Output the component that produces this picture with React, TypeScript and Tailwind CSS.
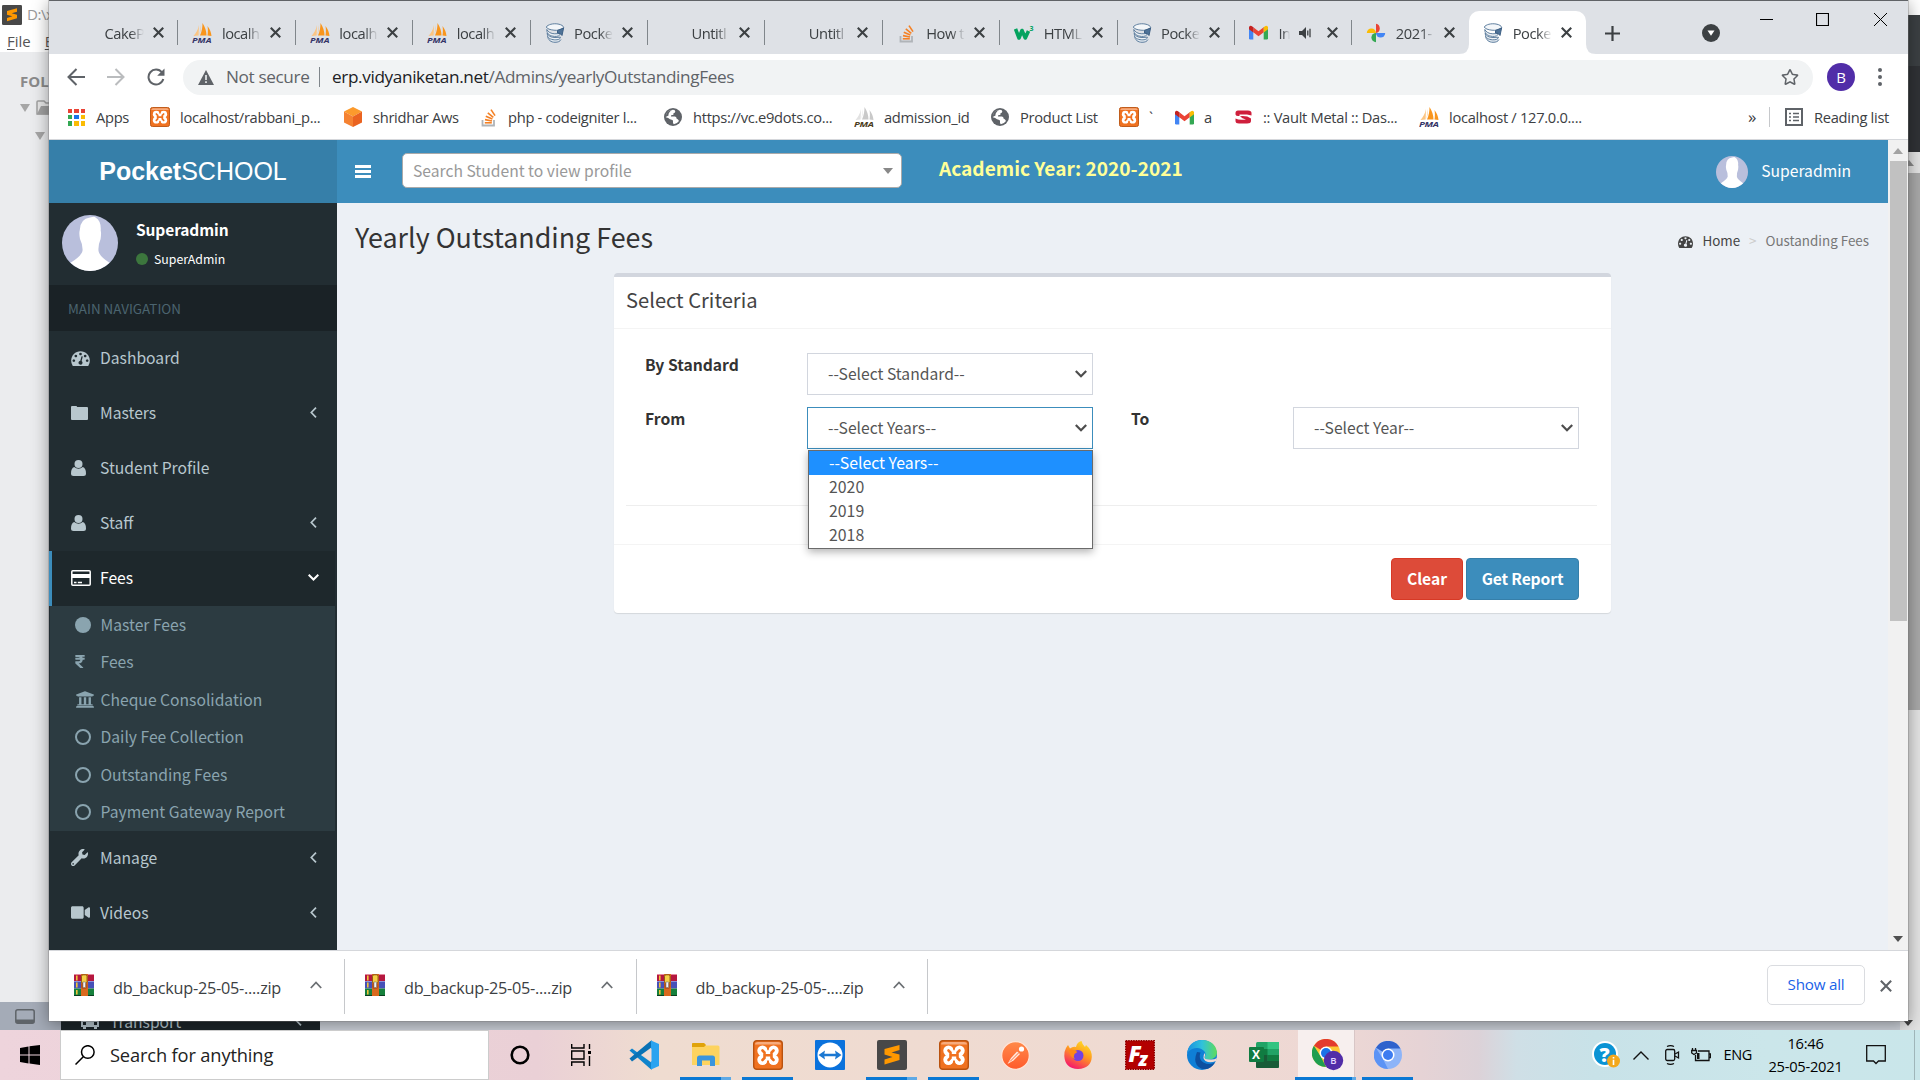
import React from 'react';
import { FaRegStar, FaWrench, FaVideo, FaUniversity, FaRupeeSign } from 'react-icons/fa';

const UI = "font-['Open_Sans',sans-serif]";
const SRC = "font-['Noto_Sans_CJK_JP',sans-serif]";

/* ---------- small logos ---------- */

function Pma({ gray = false }: { gray?: boolean }) {
  const a = gray ? '#c9c9c9' : '#f9951c';
  const b = gray ? '#e2e2e2' : '#fbc583';
  return (
    <svg width="20" height="20" viewBox="0 0 20 20" className="shrink-0">
      <path d="M7 2 L6.6 12.5 L1.5 13 C4 10 6 7 7 2Z" fill={b} />
      <path d="M10.5 0 C13 4 14.500 8 14.500 12.5 L8 12.5 C10 8 10.500 4 10.500 0Z" fill={a} />
      <path d="M9 2 C9 7 8 10 7.300 12.300 C8 9 8.300 5 9 2Z" fill={b} />
      <path d="M15.500 3 C18 6.500 19 9 19.5 13 L15.500 12.5 C16 9 16 6 15.500 3Z" fill={a} />
      <text x="0" y="19.5" fontSize="7.600" fontWeight="700" fontStyle="italic" fontFamily="Open Sans" textLength="19.500" lengthAdjust="spacingAndGlyphs" fill={gray ? '#4a3c20' : '#343466'}>PMA</text>
    </svg>
  );
}

function Pocket() {
  return (
    <svg width="20" height="20" viewBox="0 0 20 20" className="shrink-0" fill="none" stroke="#5f7f9f" strokeWidth="1">
      <path d="M2.5 13 C3 17 6 19.3 10 19.3 C13 19.3 15 18.5 16 16.5" fill="#dfe7ee" />
      <path d="M2.2 10 C3 13 6 14.5 10 14.5 L15.5 14.2 C15.5 16 13 17 9.5 16.8 C5.5 16.5 2.8 15 2.5 12.5Z" fill="#eef2f6" />
      <path d="M1.8 6.5 C3 9 6 10.8 9.8 10.8 L15.5 10.5 C15 12.8 12.5 13.6 9.5 13.4 C5 13 2.5 11 2 8.6Z" fill="#eef2f6" />
      <path d="M1.2 4 C3 1.5 8 .2 13 1 C16.5 1.6 18.3 3 18.8 4.5 C16 7 12.5 7.6 9 7.2 C5 6.8 2.3 5.8 1.2 4Z" fill="#f3f6f9" />
      <path d="M12.5 7.5 L18.6 5 L17 12.500 L15.200 10.5 L12.500 10Z" fill="#4f7398" stroke="#3d5f84" />
    </svg>
  );
}

function StackO() {
  return (
    <svg width="18" height="20" viewBox="0 0 18 20" className="shrink-0" fill="none">
      <path d="M2.500 13 V18.500 H14 V13" stroke="#b0b4b8" strokeWidth="1.800" />
      <g stroke="#f48024" strokeWidth="1.600">
        <path d="M4.800 15.800 H11.800" />
        <path d="M5 12.600 L12 14" />
        <path d="M5.800 9.300 L12.400 12" />
        <path d="M7.800 5.900 L13.300 10.400" />
        <path d="M11 2.600 L15 8.600" />
      </g>
    </svg>
  );
}

function W3() {
  return (
    <svg width="20" height="20" viewBox="0 0 20 20" className="shrink-0">
      <path d="M1.500 6 L5 15 L8 7.500 L11.300 15 L14.500 8" fill="none" stroke="#04a35f" strokeWidth="3.600" strokeLinejoin="round" />
      <text x="15.500" y="7.500" fontSize="7" fontWeight="700" fontFamily="Open Sans" fill="#04a35f">3</text>
    </svg>
  );
}

function Gmail() {
  return (
    <svg width="19" height="15" viewBox="0 0 19 15" className="shrink-0">
      <path d="M0 2 H4.300 V14.500 H1.200 Q0 14.500 0 13.300Z" fill="#4285f4" />
      <path d="M19 2 H14.700 V14.500 H17.800 Q19 14.500 19 13.300Z" fill="#34a853" />
      <path d="M4.300 2.200 L9.500 6.200 L14.700 2.200 V7.300 L9.500 11.300 L4.300 7.300Z" fill="#ea4335" />
      <path d="M14.700 2.200 L16 1.200 Q17 .3 18.200 1 Q19 1.500 19 2.500 V4.200 L14.700 7.400Z" fill="#fbbc04" />
      <path d="M4.300 2.200 L3 1.200 Q2 .3 .8 1 Q0 1.500 0 2.500 V4.200 L4.300 7.400Z" fill="#c5221f" />
    </svg>
  );
}

function Photos() {
  return (
    <svg width="20" height="20" viewBox="0 0 20 20" className="shrink-0">
      <path d="M10 10 V.8 A4.700 4.700 0 0 1 10 10Z" fill="#ea4335" />
      <path d="M10 10 H.8 A4.600 4.600 0 0 1 10 10Z" fill="#fbbc04" />
      <path d="M10 10 H19.200 A4.600 4.600 0 0 1 10 10Z" fill="#4285f4" />
      <path d="M10 10 V19.200 A4.600 4.600 0 0 1 10 10Z" fill="#34a853" />
    </svg>
  );
}

function Xampp({ w = 20, h = 20 }: { w?: number; h?: number }) {
  return (
    <svg width={w} height={h} viewBox="0 0 30 30" className="shrink-0">
      <rect x=".7" y=".7" width="28.600" height="28.600" rx="3" fill="#f07220" stroke="#b9520f" strokeWidth="1.400" />
      <path d="M2 4.500 Q2 2 5 2 H25 Q28 2 28 4.500 Z" fill="#f7ab7c" />
      <g fill="#fff">
        <circle cx="9.500" cy="10.700" r="5.200" />
        <circle cx="20.500" cy="10.700" r="5.200" />
        <circle cx="9.500" cy="19.700" r="5.200" />
        <circle cx="20.500" cy="19.700" r="5.200" />
        <path d="M8 10.500 H22 V20 H8Z" />
      </g>
      <path d="M15 6 V9.500 M15 24.500 V21" stroke="#f07220" strokeWidth="2" />
      <path d="M1.500 15.200 L5 13.800 V16.600Z M28.500 15.200 L25 13.800 V16.600Z" fill="#f07220" />
      <path d="M9.500 10.500 L11.500 12.500 V18 L9.500 20 M20.500 10.500 L18.500 12.500 V18 L20.500 20 M11.500 15.200 H18.500" stroke="#f07220" strokeWidth="2.600" fill="none" strokeLinecap="round" />
    </svg>
  );
}

function Aws() {
  return (
    <svg width="18" height="20" viewBox="0 0 18 20" className="shrink-0">
      <path d="M9 0 L18 4.500 L9 9.500 L0 4.500Z" fill="#fc9a2c" />
      <path d="M0 4.500 L9 9.500 V20 L0 15.500Z" fill="#f58232" />
      <path d="M18 4.500 L9 9.500 V20 L18 15.500Z" fill="#ea6320" />
    </svg>
  );
}

function Globe() {
  return (
    <svg width="18" height="18" viewBox="0 0 18 18" className="shrink-0">
      <circle cx="9" cy="9" r="9" fill="#5f6368" />
      <path d="M9 1.800 Q11.500 2 11.300 3.800 Q11 5 9.500 5.300 L9.300 7 H8 Q6.500 7 7 8.500 H11 Q12.800 8.800 12.500 10.500 L14 11.500 L15 13 Q13 16 9.800 16.200 L9 15 V12.500 Q7.800 11.500 6 11.300 Q4.500 9.500 1.800 9.200 Q1.800 2.500 9 1.800Z" fill="#fff" />
      <path d="M1.800 9 Q1.800 2.500 8 2 Q4 4.500 4.500 7.500 Q3 8 1.800 9Z" fill="#5f6368" />
    </svg>
  );
}

function Vault() {
  return (
    <svg width="17" height="14" viewBox="0 0 17 14" className="shrink-0">
      <path d="M3 .5 H13 Q16.500 .5 16.500 3 V5.500 L12 4.500 H4.500 V6 Q1 6.500 .5 4.500 V3 Q.5 .5 3 .5Z" fill="#cf1f3c" />
      <path d="M5 6.200 Q12 5.500 16 8.500 V11 Q16 13.500 12 13.500 H4 Q.5 13.500 .5 11 V8.500 Q4 10.500 11 9.500 Q7 8.500 5 6.200Z" fill="#cf1f3c" />
    </svg>
  );
}

function AppsGrid() {
  const c = ['#ea4335', '#ea4335', '#ea4335', '#34a853', '#1a73e8', '#fbbc04', '#34a853', '#fbbc04', '#fbbc04'];
  return (
    <span className="grid h-[17px] w-[17px] grid-cols-3 gap-[2px]">
      {c.map((x, i) => (
        <span key={i} style={{ background: x }} />
      ))}
    </span>
  );
}

function Rar() {
  return (
    <svg width="20" height="22" viewBox="0 0 20 22" className="shrink-0">
      <rect width="20" height="7" fill="#b5173f" />
      <rect width="20" height="1" fill="#e58aa0" />
      <rect y="7" width="20" height="7.500" fill="#4650b8" />
      <rect y="7" width="20" height="1" fill="#8b90da" />
      <rect y="14.500" width="20" height="7.500" fill="#16803c" />
      <rect y="21" width="20" height="1" fill="#0b3d1f" />
      <rect x="7" width="7" height="22" fill="#d9691e" />
      <rect x="2" y="1.500" width="1.600" height="5" fill="#f0c23a" />
      <rect x="2" y="8.500" width="1.600" height="5" fill="#f0c23a" />
      <rect x="2" y="16" width="1.600" height="4.500" fill="#f0c23a" />
      <rect x="7.500" y=".8" width="5.500" height="8.500" rx="1.500" fill="#f6cf45" stroke="#7a4a10" strokeWidth=".8" />
      <path d="M7 9.500 H13.500 V13 L12 15 H8.500 L7 13Z" fill="#b9551a" />
      <rect x="9" y="8" width="2.600" height="5.500" fill="#f2f2f2" stroke="#666" strokeWidth=".5" />
    </svg>
  );
}

function Cross({ s = 10, w = 2, c = '#3c4043' }: { s?: number; w?: number; c?: string }) {
  return (
    <svg width={s} height={s} viewBox="0 0 10 10" className="shrink-0">
      <path d="M.7 .7 L9.300 9.300 M9.300 .7 L.7 9.300" stroke={c} strokeWidth={w} />
    </svg>
  );
}

/* ---------- browser chrome ---------- */

const tabs: { icon: React.ReactNode; text: string }[] = [
  { icon: null, text: 'CakeP' },
  { icon: <Pma />, text: 'localh' },
  { icon: <Pma />, text: 'localh' },
  { icon: <Pma />, text: 'localh' },
  { icon: <Pocket />, text: 'Pocke' },
  { icon: null, text: 'Untitl' },
  { icon: null, text: 'Untitl' },
  { icon: <StackO />, text: 'How t' },
  { icon: <W3 />, text: 'HTML' },
  { icon: <Pocket />, text: 'Pocke' },
  { icon: <Gmail />, text: 'In' },
  { icon: <Photos />, text: '2021-' },
  { icon: <Pocket />, text: 'Pocke' },
];

function TabStrip() {
  return (
    <div className={`flex h-[54px] shrink-0 items-start border-t border-[#606367] bg-[#dee1e6] pl-[12px] ${UI}`}>
      {tabs.map((t, i) => {
        const active = i === 12;
        const gmail = i === 10;
        return (
          <div key={i} className={`relative mt-[10px] flex h-[43px] shrink-0 items-center ${active ? '-ml-px w-[117px] rounded-t-[10px] bg-white pl-[14.500px]' : 'w-[117.400px] pl-[14px]'}`}>
            {active && (
              <>
                <svg width="10" height="10" className="absolute bottom-0 -left-[10px]"><path d="M10 0 V10 H0 Q10 10 10 0Z" fill="#fff" /></svg>
                <svg width="10" height="10" className="absolute -right-[10px] bottom-0"><path d="M0 0 V10 H10 Q0 10 0 0Z" fill="#fff" /></svg>
              </>
            )}
            <span className="flex w-[20px] justify-center">{t.icon}</span>
            <span className={`ml-[9.500px] text-[14.700px] leading-[20px] tracking-[-0.45px] whitespace-nowrap text-[#3c4043] ${gmail ? 'w-[12px] [mask-image:linear-gradient(90deg,#000_40%,transparent)]' : 'w-[39px] [mask-image:linear-gradient(90deg,#000_65%,transparent)]'}`}>
              {t.text}
            </span>
            {gmail && (
              <svg width="14" height="12" viewBox="0 0 14 12" className="ml-[9px]">
                <path d="M0 4 H3 L7 0 V12 L3 8 H0Z" fill="#3c4043" />
                <path d="M8.800 3.500 V8.500 M11 1.800 V10.200" stroke="#3c4043" strokeWidth="1.300" fill="none" />
              </svg>
            )}
            <span className={gmail ? 'ml-[14px] flex' : 'ml-[9px] flex'}><Cross s={11} w={1.9} /></span>
            {i < 11 && <span className="ml-auto h-[25px] w-px bg-[#80868b]" />}
          </div>
        );
      })}
      <svg width="15" height="15" viewBox="0 0 15 15" className="mt-[25px] ml-[19px]"><path d="M7.500 0 V15 M0 7.500 H15" stroke="#3c4043" strokeWidth="2.200" /></svg>
      <svg width="18" height="18" viewBox="0 0 18 18" className="mt-[23px] ml-[82px]"><circle cx="9" cy="9" r="9" fill="#3c4043" /><path d="M5.500 6.500 H12.500 L9 11.800Z" fill="#fff" /></svg>
      <svg width="13" height="13" viewBox="0 0 13 13" className="mt-[12px] ml-[40px]"><path d="M0 6.500 H13" stroke="#000" /></svg>
      <svg width="13" height="13" viewBox="0 0 13 13" className="mt-[12px] ml-[43px]"><path d="M.5 .5 H12.500 V12.500 H.5Z" stroke="#000" fill="none" strokeWidth="1.200" /></svg>
      <svg width="13" height="13" viewBox="0 0 13 13" className="mt-[12px] ml-[45px]"><path d="M0 0 L13 13 M13 0 L0 13" stroke="#000" /></svg>
    </div>
  );
}

function Toolbar() {
  return (
    <div className={`flex h-[46px] shrink-0 items-center pl-[18px] ${UI}`}>
      <svg width="18" height="18" viewBox="0 0 18 18" fill="none" stroke="#5f6368" strokeWidth="2"><path d="M18 9 H2 M9.500 1 L1.500 9 L9.500 17" /></svg>
      <svg width="18" height="18" viewBox="0 0 18 18" fill="none" stroke="#babcbe" strokeWidth="2" className="ml-[22px]"><path d="M0 9 H16 M8.500 1 L16.500 9 L8.500 17" /></svg>
      <svg width="18" height="18" viewBox="0 0 18 18" fill="none" className="ml-[22px]"><path d="M15 4.500 A7.500 7.500 0 1 0 16.300 11" stroke="#5f6368" strokeWidth="2" /><path d="M17.500 .5 V7.800 H10.200Z" fill="#5f6368" /></svg>
      <div className="ml-[18px] flex h-[35px] w-[1630px] items-center rounded-full bg-[#f1f3f4] pl-[15px] text-[17.200px] tracking-[-0.370px] text-[#5f6368]">
        <svg width="16" height="15" viewBox="0 0 16 15"><path d="M8 0 L16 15 H0Z" fill="#5f6368" /><path d="M7.200 5 H8.800 V10 H7.200Z M7.200 11.200 H8.800 V12.900 H7.200Z" fill="#f1f3f4" /></svg>
        <span className="ml-[12px] w-[93px] leading-[24px] whitespace-nowrap">Not secure</span>
        <span className="h-[20px] w-px bg-[#80868b]" />
        <span className="ml-[12px] leading-[24px] whitespace-nowrap"><span className="text-[#202124]">erp.vidyaniketan.net</span>/Admins/yearlyOutstandingFees</span>
        <FaRegStar className="mr-[14px] ml-auto h-[18px] w-[18px]" />
      </div>
      <div className="ml-[14px] flex h-[28px] w-[28px] items-center justify-center rounded-full bg-[#512da8] text-[15px] text-white">B</div>
      <svg width="4" height="18" viewBox="0 0 4 18" className="ml-[23px]" fill="#5f6368"><circle cx="2" cy="2" r="2" /><circle cx="2" cy="9" r="2" /><circle cx="2" cy="16" r="2" /></svg>
    </div>
  );
}

function Mark({ w, g, icon, text }: { w: string; g: string; icon: React.ReactNode; text: string }) {
  return (
    <div className={`flex shrink-0 items-center ${w} ${g}`}>
      {icon}
      <span className="whitespace-nowrap">{text}</span>
    </div>
  );
}

function Bookmarks() {
  return (
    <div className={`flex h-[39px] shrink-0 items-center pb-[5px] pl-[19px] text-[14.700px] leading-[20px] tracking-[-0.3px] text-[#3c4043] ${UI}`}>
      <Mark w="w-[82px]" g="gap-[11px]" icon={<AppsGrid />} text="Apps" />
      <Mark w="w-[194px]" g="gap-[10px]" icon={<Xampp />} text="localhost/rabbani_p..." />
      <Mark w="w-[136px]" g="gap-[11px]" icon={<Aws />} text="shridhar Aws" />
      <Mark w="w-[184px]" g="gap-[10px]" icon={<StackO />} text="php - codeigniter l..." />
      <Mark w="w-[190px]" g="gap-[11px]" icon={<Globe />} text="https://vc.e9dots.co..." />
      <Mark w="w-[137px]" g="gap-[10px]" icon={<Pma gray />} text="admission_id" />
      <Mark w="w-[128px]" g="gap-[11px]" icon={<Globe />} text="Product List" />
      <Mark w="w-[56px]" g="gap-[10px]" icon={<Xampp />} text="`" />
      <Mark w="w-[60px]" g="gap-[10px]" icon={<Gmail />} text="a" />
      <Mark w="w-[184px]" g="gap-[11px]" icon={<Vault />} text=":: Vault Metal :: Das..." />
      <Mark w="w-[329px]" g="gap-[10px]" icon={<Pma />} text="localhost / 127.0.0...." />
      <span className="w-[21px] text-[17px]">»</span>
      <span className="h-[20px] w-px bg-[#c6c8cb]" />
      <svg width="18" height="18" viewBox="0 0 18 18" className="mr-[11px] ml-[15px]" fill="none" stroke="#5f6368">
        <rect x="1" y="1" width="16" height="16" strokeWidth="2" />
        <path d="M4 5.500 H6 M8 5.500 H14 M4 9 H6 M8 9 H14 M4 12.500 H6 M8 12.500 H14" strokeWidth="1.700" />
      </svg>
      <span>Reading list</span>
    </div>
  );
}

/* ---------- web page ---------- */

function Avatar({ s }: { s: number }) {
  return (
    <svg width={s} height={s} viewBox="0 0 56 56" className="shrink-0">
      <circle cx="28" cy="28" r="28" fill="#b9bfdc" />
      <path d="M28 2.500 Q33 1 33.500 2.500 Q39.500 6 38.700 16 Q39.500 17 38.600 24 Q36 30 36.500 36 Q37 41 47.500 47.800 Q39 56 28 56 Q17 56 8.500 47.800 Q19.500 41 20.500 36 Q21 30 18 24 Q16.800 18 17.800 15 Q18 4 28 2.500Z" fill="#fff" />
    </svg>
  );
}

function Dash({ className }: { className: string }) {
  return (
    <svg viewBox="0 128 1792 1536" className={className} fill="currentColor">
      <path d="M384 1152q0-53-37.500-90.500t-90.500-37.500-90.500 37.500-37.500 90.500 37.500 90.500 90.500 37.500 90.500-37.500 37.500-90.500zm192-448q0-53-37.500-90.500t-90.500-37.500-90.500 37.500-37.500 90.500 37.500 90.500 90.500 37.500 90.500-37.500 37.500-90.500zm428 481l101-382q6-26-7.500-48.500t-38.500-29.500-48 6.500-30 39.500l-101 382q-60 5-107 43.500t-63 98.500q-20 77 20 146t117 89 146-20 89-117q16-60-6-117t-72-91zm660-33q0-53-37.500-90.500t-90.500-37.500-90.500 37.500-37.500 90.500 37.500 90.500 90.500 37.500 90.500-37.500 37.500-90.500zm-640-640q0-53-37.500-90.500t-90.500-37.500-90.500 37.500-37.500 90.500 37.500 90.500 90.500 37.500 90.500-37.500 37.500-90.500zm448 192q0-53-37.500-90.500t-90.500-37.500-90.500 37.500-37.500 90.500 37.500 90.500 90.500 37.500 90.500-37.500 37.500-90.500zm320 448q0 261-141 483-19 29-54 29h-1402q-35 0-54-29-141-221-141-483 0-182 71-348t191-286 286-191 348-71 348 71 286 191 191 286 71 348z" />
    </svg>
  );
}

const FolderIcon = () => (
  <svg width="17" height="14" viewBox="0 0 17 14" fill="currentColor"><path d="M0 1 Q0 0 1 0 H5 Q6 0 6.200 1 H16 Q17 1 17 2 V13 Q17 14 16 14 H1 Q0 14 0 13Z" /></svg>
);
const UserIcon = () => (
  <svg width="15" height="16" viewBox="0 0 15 16" fill="currentColor"><circle cx="7.500" cy="4" r="4" /><path d="M3.200 7 Q0 8 0 13.500 Q0 16 2.500 16 H12.500 Q15 16 15 13.500 Q15 8 11.800 7 Q9.800 8.800 7.500 8.800 Q5.200 8.800 3.200 7Z" /></svg>
);
const CardIcon = () => (
  <svg width="20" height="16" viewBox="0 0 20 16"><rect x=".8" y=".8" width="18.400" height="14.400" rx="1" fill="none" stroke="currentColor" strokeWidth="1.500" /><path d="M1 4 H19 V8 H1Z M3 11.800 H5.500 V13.300 H3Z M6.800 11.800 H11 V13.300 H6.800Z" fill="currentColor" /></svg>
);

function Chev({ down = false }: { down?: boolean }) {
  return down ? (
    <svg width="11" height="7" viewBox="0 0 11 7" className="mr-[16px] ml-auto" fill="none" stroke="currentColor" strokeWidth="2"><path d="M.7 .8 L5.500 5.500 L10.300 .8" /></svg>
  ) : (
    <svg width="7" height="11" viewBox="0 0 7 11" className="mr-[20px] ml-auto" fill="none" stroke="currentColor" strokeWidth="1.700"><path d="M6 .7 L1.300 5.500 L6 10.300" /></svg>
  );
}

function NavItem({ icon, text, open = false, arrow = true }: { icon: React.ReactNode; text: string; open?: boolean; arrow?: boolean }) {
  return (
    <div className={`flex h-[55px] shrink-0 items-center pb-[2px] ${open ? 'mr-[2px] border-l-[3px] border-[#3c8dbc] bg-[#1e282c] pl-[19px] text-white' : 'pl-[22px]'}`}>
      <span className="flex w-[29px]">{icon}</span>
      <span>{text}</span>
      {arrow && <Chev down={open} />}
    </div>
  );
}

function SubItem({ icon, text }: { icon: React.ReactNode; text: string }) {
  return (
    <div className="flex h-[37.500px] items-center pl-[25px]">
      <span className="flex w-[25.500px] shrink-0">{icon}</span>
      <span className="whitespace-nowrap">{text}</span>
    </div>
  );
}

const Ring = () => <span className="h-[16px] w-[16px] rounded-full border-[2.500px] border-current" />;

function Sidebar() {
  return (
    <div className="flex w-[288px] shrink-0 flex-col overflow-hidden bg-[#222d32] text-[15.670px] leading-[24px] text-[#b8c7ce]">
      <div className="flex h-[82px] shrink-0 pt-[12px] pl-[13px]">
        <Avatar s={56} />
        <div className="ml-[18px] text-white">
          <div className="mt-[3px] text-[15.500px] leading-[22px] font-bold tracking-[-0.1px]">Superadmin</div>
          <div className="mt-[9px] flex items-center text-[12.300px] leading-[20px]">
            <span className="mr-[6px] h-[12px] w-[12px] rounded-full bg-[#3c763d]" />SuperAdmin
          </div>
        </div>
      </div>
      <div className="flex h-[46px] shrink-0 items-center bg-[#1a2226] pl-[19px] text-[13.400px] text-[#4b646f]">MAIN NAVIGATION</div>
      <NavItem icon={<Dash className="h-[16px] w-[19px]" />} text="Dashboard" arrow={false} />
      <NavItem icon={<FolderIcon />} text="Masters" />
      <NavItem icon={<UserIcon />} text="Student Profile" arrow={false} />
      <NavItem icon={<UserIcon />} text="Staff" />
      <NavItem icon={<CardIcon />} text="Fees" open />
      <div className="mr-[2px] ml-px shrink-0 bg-[#2c3b41] text-[#8aa4af]">
        <SubItem icon={<span className="h-[16px] w-[16px] rounded-full bg-current" />} text="Master Fees" />
        <SubItem icon={<FaRupeeSign className="mb-[2px] h-[15px] w-[10px]" />} text="Fees" />
        <SubItem icon={<FaUniversity className="h-[19px] w-[20px]" />} text="Cheque Consolidation" />
        <SubItem icon={<Ring />} text="Daily Fee Collection" />
        <SubItem icon={<Ring />} text="Outstanding Fees" />
        <SubItem icon={<Ring />} text="Payment Gateway Report" />
      </div>
      <NavItem icon={<FaWrench className="h-[17px] w-[17px]" />} text="Manage" />
      <NavItem icon={<FaVideo className="h-[17px] w-[19px]" />} text="Videos" />
    </div>
  );
}

function Select({ text, focus = false }: { text: string; focus?: boolean }) {
  return (
    <div className={`flex h-[42px] w-[286px] shrink-0 items-center border bg-white pl-[20px] text-[#555] ${focus ? 'border-[#3c8dbc]' : 'border-[#d2d6de]'}`}>
      <span>{text}</span>
      <svg width="12" height="8" viewBox="0 0 12 8" className="mr-[5px] ml-auto" fill="none" stroke="#4d4d4d" strokeWidth="2.200"><path d="M.8 1 L6 6.200 L11.200 1" /></svg>
    </div>
  );
}

function Criteria() {
  return (
    <div className="ml-[277px] h-[340px] w-[997px] rounded-[4px] border-t-[4px] border-[#d2d6de] bg-white text-[15.670px] leading-[24px] text-[#333] shadow-[0_1px_1px_rgba(0,0,0,0.1)]">
      <div className="flex h-[52px] items-center border-b border-[#f4f4f4] pb-[5px] pl-[12px] text-[20.150px] text-[#444]">Select Criteria</div>
      <div className="flex h-[54px] pt-[24px] pl-[31px]">
        <span className="w-[162px] font-bold">By Standard</span>
        <Select text="--Select Standard--" />
      </div>
      <div className="relative flex h-[97px] pt-[24px] pl-[31px]">
        <span className="w-[162px] font-bold">From</span>
        <Select text="--Select Years--" focus />
        <span className="ml-[38px] w-[162px] font-bold">To</span>
        <Select text="--Select Year--" />
        <div className="absolute top-[67px] left-[194px] z-10 h-[99px] w-[285px] border border-[#6b6b6b] bg-white text-[15.850px] leading-[24px] text-[#555] shadow-[0_3px_8px_rgba(0,0,0,0.3)]">
          <div className="bg-[#1e90ff] pl-[20px] text-white">--Select Years--</div>
          {['2020', '2019', '2018'].map((y) => (
            <div key={y} className="pl-[20px]">{y}</div>
          ))}
        </div>
      </div>
      <div className="mr-[14px] ml-[12px] mt-[25px] h-px bg-[#eee]" />
      <div className="mt-[38px] flex justify-end gap-[3px] border-t border-[#f4f4f4] pt-[13px] pr-[32px] font-bold text-white">
        <div className="flex h-[42px] w-[72px] items-center justify-center rounded-[4px] border border-[#d73925] bg-[#dd4b39]">Clear</div>
        <div className="flex h-[42px] w-[113px] items-center justify-center rounded-[4px] border border-[#367fa9] bg-[#3c8dbc] tracking-[-0.15px]">Get Report</div>
      </div>
    </div>
  );
}

function ScrollArrow({ up = false, c = '#505050' }: { up?: boolean; c?: string }) {
  return (
    <svg width="10" height="6" viewBox="0 0 10 6"><path d={up ? 'M5 0 L10 6 H0Z' : 'M0 0 H10 L5 6Z'} fill={c} /></svg>
  );
}

function WebPage() {
  return (
    <div className="flex h-[811px] shrink-0 border-t border-[#d5d7db]">
      <div className={`flex w-[1839px] flex-col ${SRC}`}>
        <div className="flex h-[63px] shrink-0 bg-[#3c8dbc]">
          <div className="flex w-[288px] items-center justify-center bg-[#367fa9] pb-[2px] font-['Liberation_Sans',sans-serif] text-[25px] leading-[30px] text-white">
            <b>Pocket</b>SCHOOL
          </div>
          <div className="flex flex-1 items-center">
            <div className="ml-[18px] flex w-[16px] flex-col gap-[2px]">
              <span className="h-[3px] bg-white" /><span className="h-[3px] bg-white" /><span className="h-[3px] bg-white" />
            </div>
            <div className="mb-[2px] ml-[31px] flex h-[35px] w-[500px] items-center rounded-[5px] border border-[#aaa] bg-white pl-[10px] text-[15.670px] text-[#999]">
              Search Student to view profile
              <svg width="10" height="6" viewBox="0 0 10 6" className="mr-[8px] ml-auto"><path d="M0 0 H10 L5 6Z" fill="#888" /></svg>
            </div>
            <div className="mb-[8px] ml-[37px] text-[19.100px] leading-[24px] font-bold text-[#ffff99]">Academic Year: 2020-2021</div>
            <div className="mr-[37px] ml-auto flex items-center gap-[13px] text-[15.670px] text-white">
              <Avatar s={32} /><span className="mb-[2px]">Superadmin</span>
            </div>
          </div>
        </div>
        <div className="flex min-h-0 flex-1">
          <Sidebar />
          <div className="flex-1 bg-[#ecf0f5]">
            <div className="flex h-[70px] justify-between pr-[19px] pl-[18px]">
              <span className="mt-[14px] text-[26.860px] leading-[40px] text-[#333]">Yearly Outstanding Fees</span>
              <span className="mt-[26px] flex h-[22px] items-center text-[13.400px] text-[#444]">
                <Dash className="mt-[2px] h-[13px] w-[15px]" />
                <span className="ml-[9px]">Home</span>
                <span className="mx-[9px] text-[#ccc]">&gt;</span>
                <span className="text-[#777]">Oustanding Fees</span>
              </span>
            </div>
            <Criteria />
          </div>
        </div>
      </div>
      <div className="flex flex-1 flex-col items-center bg-[#f1f1f1]">
        <span className="flex h-[21px] items-center"><ScrollArrow up c="#a3a3a3" /></span>
        <span className="h-[460px] w-[17px] bg-[#c1c1c1]" />
        <span className="mt-auto flex h-[22px] items-center"><ScrollArrow /></span>
      </div>
    </div>
  );
}

function Downloads() {
  return (
    <div className={`flex h-[71px] shrink-0 items-center border-t border-[#d5d7db] bg-white text-[16.250px] text-[#3c4043] ${UI}`}>
      {[0, 1, 2].map((i) => (
        <div key={i} className={`flex h-[55px] items-center border-r border-[#c6c8cb] ${i ? 'w-[291.500px] pl-[20px]' : 'w-[296px] pl-[25px]'}`}>
          <span className="mb-[2px]"><Rar /></span>
          <span className="mt-[4px] ml-[19px] w-[169px] tracking-[-0.250px] whitespace-nowrap">db_backup-25-05-....zip</span>
          <svg width="12" height="8" viewBox="0 0 12 8" className="mb-[3px] ml-[28px]" fill="none" stroke="#6b6f73" strokeWidth="1.800"><path d="M.8 7 L6 1.500 L11.200 7" /></svg>
        </div>
      ))}
      <div className="mb-[2px] ml-auto flex h-[40px] w-[98px] items-center justify-center rounded-[5px] border border-[#dadce0] pb-[2px] text-[15.200px] tracking-[-0.2px] text-[#1a62e8]">Show all</div>
      <div className="mr-[16px] mb-[1px] ml-[15px]"><Cross s={12} w={1.7} c="#5f6368" /></div>
    </div>
  );
}

/* ---------- taskbar ---------- */

function SublimeLogo({ w, h }: { w: number; h: number }) {
  return (
    <svg width={w} height={h} viewBox="0 0 30 30" className="shrink-0">
      <rect width="30" height="30" rx="2" fill="#484848" />
      <path d="M7.500 9 L22.500 5 V10 L14.500 12.500 L22.500 14.500 V20 L7.500 24.500 V19.500 L15.500 17 L7.500 14.500Z" fill="#ff9800" />
    </svg>
  );
}

const taskIcons: { el: React.ReactNode; bar?: string; light?: boolean; on?: boolean }[] = [
  { el: <svg width="20" height="20" viewBox="0 0 20 20"><circle cx="10" cy="10" r="8.300" fill="none" stroke="#000" strokeWidth="2.600" /></svg> },
  { el: <svg width="21" height="22" viewBox="0 0 21 22" fill="none" stroke="#000" strokeWidth="1.400"><path d="M.7 0 V4 H13 V0 M.7 22 V18 H13 V22 M.7 7 H13 V15 H.7Z M18.500 0 V5 M18.500 12 V22" /><path d="M17 7 H20 V10 H17Z" fill="#000" stroke="none" /></svg> },
  { el: <svg width="30" height="30" viewBox="0 0 30 30"><path d="M.5 10.500 L3 8.500 L23 23 V29.500 L21.500 29Z" fill="#0f84cc" /><path d="M.5 18.500 L3 21.500 L23 7 V.5 L21.500 1Z" fill="#0a72b5" /><path d="M22 .5 L30 4 V26 L22 29.500Z" fill="#2aa3f0" /><path d="M22.500 8.500 V21.500 L13.500 15Z" fill="#f0dcd6" /></svg> },
  { el: <svg width="28" height="24" viewBox="0 0 28 24"><path d="M0 1 Q0 0 1 0 H12 L14 2.500 H26 Q27.500 2.500 27.500 4 V22 H0Z" fill="#fdd35f" /><path d="M0 1 Q0 0 1 0 H12 L14 2 L12 4 H0Z" fill="#e0a30a" /><path d="M5 23 V15 Q5 12.500 7.500 12.500 H20.500 Q23 12.500 23 15 V23 H18 V17.500 H10 V23Z" fill="#3a95dd" /></svg>, bar: 'w-[51px]', light: true },
  { el: <Xampp w={30} h={30} />, bar: 'w-[51px]' },
  { el: <svg width="30" height="30" viewBox="0 0 30 30"><rect width="30" height="30" rx="1" fill="#0a72dc" /><circle cx="15" cy="15" r="12.500" fill="#fff" /><path d="M3.500 15 L10 10.500 L9.300 13.700 H20.700 L20 10.500 L26.500 15 L20 19.500 L20.700 16.300 H9.300 L10 19.500Z" fill="#1b78d2" /></svg> },
  { el: <SublimeLogo w={30} h={30} />, bar: 'w-[51px]', light: true },
  { el: <Xampp w={30} h={30} />, bar: 'w-[51px]' },
  { el: <svg width="29" height="29" viewBox="0 0 29 29"><defs><linearGradient id="pm" x1="0" y1="0" x2="0" y2="1"><stop offset="0" stopColor="#ff8a4a" /><stop offset="1" stopColor="#ff5a2b" /></linearGradient></defs><circle cx="14.500" cy="14.500" r="13.800" fill="url(#pm)" stroke="#ffe3d6" strokeWidth="1.200" /><path d="M6.500 23 L10 17 L16 10.500 L19 13 L12.500 19.500Z" fill="#ffe9df" /><circle cx="20.500" cy="8" r="2.600" fill="#fff" /><path d="M9 20.500 L17.500 12" stroke="#ff6c37" strokeWidth="1" /></svg> },
  { el: <svg width="28" height="28" viewBox="0 0 28 28"><defs><linearGradient id="ff" x1=".8" y1="0" x2=".3" y2="1"><stop offset="0" stopColor="#ffe226" /><stop offset=".45" stopColor="#ff9a1f" /><stop offset="1" stopColor="#f5136f" /></linearGradient></defs><path d="M2 7 L4 4 L6 7.500 Q9 5 12 6 Q13 1 17.500 0 Q18 3 21 6 L22 4 Q28 9 27.800 16 Q27 27.500 14 28 Q1 27.500 .3 15 Q.3 10 2 7Z" fill="url(#ff)" /><circle cx="14" cy="14.500" r="5.500" fill="#7342e0" /><path d="M5 9 Q10 8 13.500 11 L10.500 13 Q9 15.500 11 18 Q6 17 5 9Z" fill="#ff8a16" /></svg> },
  { el: <svg width="30" height="30" viewBox="0 0 30 30"><rect x=".7" y=".7" width="28.600" height="28.600" fill="#b30000" stroke="#8d0000" strokeWidth="1.400" strokeDasharray="1.500 1" /><text x="3.500" y="21.500" fontSize="22" fontWeight="800" fontStyle="italic" fontFamily="Open Sans" fill="#fff">F</text><text x="13.500" y="26" fontSize="19" fontWeight="800" fontStyle="italic" fontFamily="Open Sans" fill="#fff">z</text></svg> },
  { el: <svg width="30" height="30" viewBox="0 0 30 30"><defs><linearGradient id="eg" x1="0" y1=".3" x2="1" y2=".3"><stop offset="0" stopColor="#1b8fe0" /><stop offset=".5" stopColor="#30c1dc" /><stop offset="1" stopColor="#5fdc5a" /></linearGradient></defs><circle cx="15" cy="15" r="15" fill="#0f7fd6" /><path d="M0 14 Q1 1 15 0 Q28 .5 30 12 Q30 19 22.500 19.500 Q17 19.500 17.500 17 Q19.500 14.500 18 12 Q13 6 5 9 Q1.500 10.500 0 14Z" fill="url(#eg)" /><path d="M10 12 Q5 24 14 28.500 Q23 31 28 22.500 Q22 25.500 16.500 22.500 Q11 19 13.500 12.500Z" fill="#0d4f9f" /><path d="M17.500 13 Q15 18 18.500 21 Q23 23.500 29 21 L30 18 Q27 20 22.500 19.500 Q17 19.500 17.500 17 Q19 15 17.500 13Z" fill="#f0dad3" /></svg> },
  { el: <svg width="30" height="26" viewBox="0 0 30 26"><rect x="7" width="23" height="26" rx="1.500" fill="#21a366" /><path d="M7 7 H18.500 V13 H7Z M18.500 13 H30 V19 H18.500Z" fill="#107c41" /><path d="M18.500 0 H30 V7 H18.500Z" fill="#33c481" /><path d="M7 13 H18.500 V19 H30 V24.500 Q30 26 28.500 26 H8.500 Q7 26 7 24.500Z" fill="#185c37" /><rect y="5" width="15" height="15" rx="1" fill="#107c41" /><text x="3" y="17" fontSize="12" fontWeight="700" fontFamily="Open Sans" fill="#fff">X</text></svg> },
  { el: <svg width="32" height="32" viewBox="0 0 32 32"><circle cx="14" cy="14" r="14" fill="#fcc934" /><path d="M14 14 L2 6.800 A14 14 0 0 1 26.500 7.500 H14Z" fill="#e33b2e" /><path d="M1.900 6.800 L9 18 L14 28 A14 14 0 0 1 1.900 6.800Z" fill="#1e9e50" /><circle cx="14" cy="14" r="6.500" fill="#fff" /><circle cx="14" cy="14" r="5" fill="#1a73e8" /><circle cx="21.500" cy="21.500" r="9.700" fill="#512da8" /><text x="18.300" y="25" fontSize="9.500" fontFamily="Open Sans" fontWeight="600" fill="#e4d8ff">B</text></svg>, bar: 'w-[61px]', on: true },
  { el: <svg width="28" height="28" viewBox="0 0 28 28"><circle cx="14" cy="14" r="14" fill="#8db4f8" /><path d="M14 14 L2 6.800 A14 14 0 0 1 26.500 7.500 H14Z" fill="#2f62cc" /><path d="M1.900 6.800 L9 18 L14 28 A14 14 0 0 1 1.900 6.800Z" fill="#5b93f5" /><circle cx="14" cy="14" r="6.500" fill="#fff" /><circle cx="14" cy="14" r="5" fill="#3d7cf0" /></svg>, bar: 'w-[51px]' },
];

function Taskbar() {
  return (
    <div className={`flex h-[50px] shrink-0 bg-[linear-gradient(90deg,#eed4dc_0,#ead0d6_28%,#efdcd0_34%,#efdad2_60%,#eed8d4_69%,#e6d3d5_74%,#dcd2d8_77%,#cfdfe6_79%,#c8e2e8_83%,#cbe6ea_92%,#c9e6ea)] text-black ${UI}`}>
      <div className="flex w-[60px] items-center justify-center">
        <svg width="20" height="20" viewBox="0 0 20 20"><path d="M0 3 L8.500 1.500 V9.400 H0Z M9.500 1.300 L20 0 V9.400 H9.500Z M0 10.400 H8.500 V18.500 L0 17Z M9.500 10.400 H20 V20 L9.500 18.600Z" /></svg>
      </div>
      <div className="flex h-[50px] w-[428.500px] items-center border border-[#ccc] bg-white pl-[14px]">
        <svg width="20" height="20" viewBox="0 0 20 20" fill="none" stroke="#000" strokeWidth="1.500"><circle cx="12.800" cy="7" r="6.300" /><path d="M8.300 11.700 L.5 19.500" /></svg>
        <span className="ml-[15px] text-[18.300px] tracking-[-0.150px] text-[#222]">Search for anything</span>
      </div>
      {taskIcons.map((t, i) => (
        <div key={i} className="flex w-[62px] shrink-0 flex-col items-center">
          <div className={`flex h-[47px] items-center justify-center ${t.on ? 'ml-[1px] w-[57px] border-r border-[#d8c6c6] bg-[#f7efee] pt-[3px] pl-[4px]' : 'pt-[3px]'}`}>{t.el}</div>
          {t.bar && <div className={`flex h-[3px] justify-end bg-[#0a78d4] ${t.bar}`}>{(t.light || t.on) && <span className={`h-full bg-[#5ea9e6] ${t.on ? 'w-[4px]' : 'w-[10px]'}`} />}</div>}
        </div>
      ))}
      <div className="ml-[173px] flex items-center">
        <svg width="28" height="32" viewBox="0 0 28 32"><circle cx="13" cy="15" r="13" fill="#fff" /><circle cx="13" cy="15" r="11" fill="#0a93d4" /><text x="7.500" y="22.500" fontSize="20" fontWeight="800" fontFamily="Open Sans" fill="#fff">?</text><circle cx="21.500" cy="22" r="6.500" fill="#f3a81c" /><path d="M20.700 20.800 H22.300 V26 H20.700Z M20.700 18 H22.300 V19.600 H20.700Z" fill="#fff" /></svg>
        <svg width="16" height="9" viewBox="0 0 16 9" className="ml-[13px]" fill="none" stroke="#111" strokeWidth="1.400"><path d="M.5 8.500 L8 1 L15.500 8.500" /></svg>
        <svg width="15" height="20" viewBox="0 0 15 20" className="ml-[16px]" fill="none" stroke="#111" strokeWidth="1.300"><rect x=".7" y="4.500" width="9" height="11" rx="1.500" /><path d="M10 9 L13.500 7 V13 L10 11 M2 1.500 Q5.500 -.2 9 1.500 M2 18.500 Q5.500 20.200 9 18.500" /></svg>
        <svg width="20" height="14" viewBox="0 0 20 14" className="ml-[11px]" fill="none" stroke="#111" strokeWidth="1.300"><path d="M7 3 H18 V12.500 H4.500 V7 M18.500 6 H19.500 V9.500 H18.500 M1.500 0 V2 M4.500 0 V2 M.7 2.500 H5.500 V5 L3 6.500 L.7 5Z" /><path d="M6 5 H8.500 V11 H6Z" fill="#111" stroke="none" /></svg>
        <span className="ml-[13px] w-[42px] text-[14.500px] tracking-[-0.3px]">ENG</span>
        <div className="w-[80px] pb-[1px] text-center text-[14.700px] leading-[23px] tracking-[-0.25px]">16:46<br />25-05-2021</div>
        <svg width="20" height="20" viewBox="0 0 20 20" className="ml-[20px]" fill="none" stroke="#111" strokeWidth="1.300"><path d="M.7 .7 H19.300 V16 H12.500 L10 18.500 L7.500 16 H.7Z" /></svg>
      </div>
      <span className="mr-[5px] ml-auto w-px bg-[#9fb5b9]" />
    </div>
  );
}

/* ---------- windows behind the browser ---------- */

function Backdrop() {
  return (
    <div className="flex h-[1030px] shrink-0 justify-between bg-[#cbd0d8]">
      <div className="flex w-[320px] flex-col bg-[#ebecee]">
        <div className={`h-[52px] bg-white ${UI}`}>
          <div className="flex h-[27px] items-center pt-[2px] pl-[2px] text-[15px] tracking-[-0.4px] text-[#999]"><SublimeLogo w={20} h={20} /><span className="ml-[5px]">D:\x</span></div>
          <div className="flex h-[25px] items-center gap-[14px] pt-[3px] pl-[7px] text-[15px] text-[#555]"><span><span className="underline underline-offset-2">F</span>ile</span><span className="underline underline-offset-2">E</span></div>
        </div>
        <div className={`flex flex-1 flex-col ${UI}`}>
          <div className="mt-[18px] ml-[20px] text-[15px] leading-[22px] font-bold text-[#8a8a8a]">FOL</div>
          <div className="mt-[8px] ml-[20px] flex items-center gap-[6px]">
            <svg width="10" height="8"><path d="M0 0 H10 L5 8Z" fill="#a6a6a6" /></svg>
            <svg width="20" height="15" viewBox="0 0 20 15"><path d="M1 14 V2 Q1 1 2 1 H8 L10 3 H19 V14Z" fill="#e6e6e6" stroke="#a0a0a0" strokeWidth="1.500" /><path d="M1 14 L5 6 H20 V14.500 H1Z" fill="#a0a0a0" /></svg>
          </div>
          <svg width="10" height="8" className="mt-[17px] ml-[35px]"><path d="M0 0 H10 L5 8Z" fill="#a6a6a6" /></svg>
        </div>
        <div className="flex h-[28px] bg-[#a4abb7]">
          <div className="flex w-[61px] items-center pl-[15px]">
            <svg width="20" height="15" viewBox="0 0 20 15"><rect x=".8" y=".8" width="18.400" height="13.400" rx="2" fill="none" stroke="#5f6469" strokeWidth="1.500" /><path d="M1 10.500 H19 V14 H1Z" fill="#5f6469" /></svg>
          </div>
          <div className={`flex flex-1 items-end bg-[#1c2529] pl-[19px] text-[#b8c7ce] ${SRC}`}>
            <svg width="20" height="14" viewBox="0 0 20 14" className="mb-[1px]" fill="currentColor"><path d="M3 0 H17 L19 6 V12 H17 V14 H14 V12 H6 V14 H3 V12 H1 V6Z M3 7 V10 H6 V7Z M14 7 V10 H17 V7Z" fillRule="evenodd" /></svg>
            <span className="ml-[10px] text-[15.670px] leading-[17px]">Transport</span>
            <svg width="7" height="11" viewBox="0 0 7 11" className="mr-[18px] mb-[4px] ml-auto" fill="none" stroke="currentColor" strokeWidth="1.700"><path d="M6 .7 L1.300 5.500 L6 10.300" /></svg>
          </div>
        </div>
      </div>
      <div className="flex w-[20px] flex-col items-end bg-[#e4e4e4]">
        <div className="h-[15px] w-full bg-white" />
        <div className="h-[51px] w-full bg-[#3c4043]" />
        <div className="h-[86px] w-full bg-[#303236]" />
        <div className="flex h-[21px] w-[16px] items-center"><ScrollArrow up c="#8a8a8a" /></div>
        <div className="h-[537px] w-[19px] bg-[#a9a9a9]" />
        <div className="mt-auto mb-[4px] flex w-[17px]"><ScrollArrow c="#404040" /></div>
      </div>
    </div>
  );
}

export default function App() {
  return (
    <div className="relative flex h-[1080px] w-[1920px] flex-col overflow-hidden">
      <Backdrop />
      <div className="absolute top-0 left-[49px] flex h-[1021px] w-[1859px] flex-col bg-white shadow-[0_0_0_1px_rgba(120,120,120,0.35),0_3px_16px_rgba(0,0,0,0.4)]">
        <TabStrip />
        <Toolbar />
        <Bookmarks />
        <WebPage />
        <Downloads />
      </div>
      <div className="relative"><Taskbar /></div>
    </div>
  );
}
